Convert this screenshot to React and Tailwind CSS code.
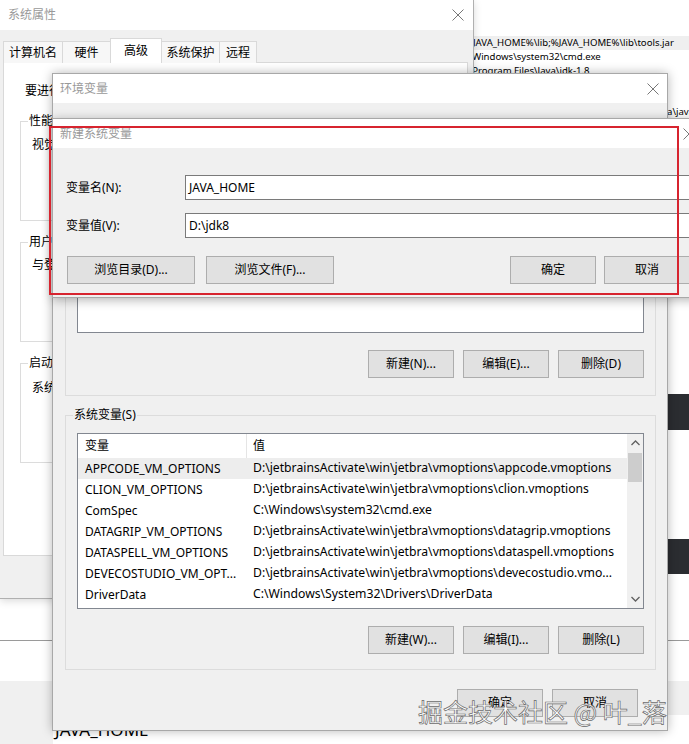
import React from 'react';

const font = "font-['Noto_Sans','Noto_Sans_CJK_SC',sans-serif]";

function CloseX({ className }) {
  return (
    <svg className={className} width="12" height="12" viewBox="0 0 12 12">
      <path d="M0.5 0.5 L11.5 11.5 M11.5 0.5 L0.5 11.5" stroke="#777" strokeWidth="1" fill="none" />
    </svg>
  );
}

function Btn({ children, className = '' }) {
  return (
    <div className={`h-[28px] flex items-center justify-center bg-[#e1e1e1] border border-[#adadad] text-[12px] text-black ${className}`}>
      {children}
    </div>
  );
}

function Group({ label, className = '', children }) {
  return (
    <div className={`relative border border-[#dcdcdc] ${className}`}>
      <span className="absolute left-[7px] top-[-10px] px-[1px] bg-inherit leading-[18px]">{label}</span>
      {children}
    </div>
  );
}

const userVars = [
  ['OneDrive', 'C:\\Users\\jason\\OneDrive'],
  ['Path', 'C:\\Users\\jason\\AppData\\Local\\Microsoft\\WindowsApps;'],
  ['TEMP', 'C:\\Users\\jason\\AppData\\Local\\Temp'],
  ['TMP', 'C:\\Users\\jason\\AppData\\Local\\Temp'],
];

const sysVars = [
  ['APPCODE_VM_OPTIONS', 'D:\\jetbrainsActivate\\win\\jetbra\\vmoptions\\appcode.vmoptions'],
  ['CLION_VM_OPTIONS', 'D:\\jetbrainsActivate\\win\\jetbra\\vmoptions\\clion.vmoptions'],
  ['ComSpec', 'C:\\Windows\\system32\\cmd.exe'],
  ['DATAGRIP_VM_OPTIONS', 'D:\\jetbrainsActivate\\win\\jetbra\\vmoptions\\datagrip.vmoptions'],
  ['DATASPELL_VM_OPTIONS', 'D:\\jetbrainsActivate\\win\\jetbra\\vmoptions\\dataspell.vmoptions'],
  ['DEVECOSTUDIO_VM_OPT...', 'D:\\jetbrainsActivate\\win\\jetbra\\vmoptions\\devecostudio.vmo...'],
  ['DriverData', 'C:\\Windows\\System32\\Drivers\\DriverData'],
];

function VarList({ rows, height, scroll }) {
  return (
    <div className="flex bg-white border border-[#828790]" style={{ height }}>
      <div className="flex-1 flex flex-col min-w-0">
        <div className="flex h-[24px] items-center">
          <div className="w-[169px] h-full flex items-center pl-[7px] border-r border-[#e5e5e5]">变量</div>
          <div className="flex-1 pl-[6px]">值</div>
        </div>
        {rows.map(([k, v], i) => (
          <div key={k} className={`flex h-[21px] items-center whitespace-nowrap overflow-hidden ${i === 0 ? 'bg-[#ededed]' : ''}`}>
            <div className="w-[169px] pl-[7px] shrink-0">{k}</div>
            <div className="pl-[6px] text-[12.2px]">{v}</div>
          </div>
        ))}
      </div>
      {scroll && (
        <div className="w-[16px] bg-[#f0f0f0] flex flex-col items-center">
          <svg className="mt-[6px]" width="9" height="6" viewBox="0 0 9 6">
            <path d="M0.5 5 L4.5 1 L8.5 5" stroke="#606060" strokeWidth="1.3" fill="none" />
          </svg>
          <div className="mt-[7px] w-[14px] h-[29px] bg-[#cdcdcd]" />
          <div className="flex-1" />
          <svg className="mb-[6px]" width="9" height="6" viewBox="0 0 9 6">
            <path d="M0.5 1 L4.5 5 L8.5 1" stroke="#606060" strokeWidth="1.3" fill="none" />
          </svg>
        </div>
      )}
    </div>
  );
}

export default function App() {
  return (
    <div className={`relative w-[689px] h-[744px] overflow-hidden bg-white text-[12px] text-black ${font}`}>
      {/* windows behind */}
      <div className="absolute left-[462px] top-[36px] w-[240px] flex flex-col text-[9.6px] leading-[14px] whitespace-nowrap">
        <div className="bg-[#efefef] pl-[3px]">%JAVA_HOME%\lib;%JAVA_HOME%\lib\tools.jar</div>
        <div className="pl-[-2px] ml-[-2px]">C:\Windows\system32\cmd.exe</div>
        <div className="ml-[-2px]">C:\Program Files\Java\jdk-1.8</div>
      </div>
      <div className="absolute left-[667px] top-[105px] text-[9.6px] leading-[14px] whitespace-nowrap">a\java</div>
      <div className="absolute left-[660px] top-[394px] w-[40px] h-[36px] bg-[#2b2d31]" />
      <div className="absolute left-[660px] top-[539px] w-[40px] h-[35px] bg-[#2b2d31]" />
      <div className="absolute left-0 top-[640px] w-full h-[1px] bg-[#9a9a9a]" />
      <div className="absolute left-0 top-[681px] w-full h-[34px] bg-[#f0f0f0]" />
      <div className="absolute left-0 top-[715px] w-[53px] h-[29px] bg-[#f0f0f0]" />
      <div className="absolute left-[55px] top-[720px] text-[17px] leading-[20px] whitespace-nowrap">JAVA_HOME</div>

      {/* 系统属性 */}
      <div className="absolute left-0 top-0 w-[474px] h-[599px] bg-[#f0f0f0] border-r border-b border-[#b0b0b0] shadow-[0_2px_8px_rgba(0,0,0,0.15)]">
        <div className="h-[30px] bg-white flex items-center justify-between pl-[8px] pr-[9px]">
          <span className="text-[#999]">系统属性</span>
          <CloseX />
        </div>
        <div className="pl-[3px] pr-[5px] pt-[8px]">
          <div className="flex items-end h-[25px] relative z-10">
            <div className="w-[60px] h-[22px] flex items-center justify-center border border-b-0 border-[#d9d9d9] bg-[#f7f7f7]">计算机名</div>
            <div className="w-[48px] h-[22px] flex items-center justify-center border border-b-0 border-l-0 border-[#d9d9d9] bg-[#f7f7f7]">硬件</div>
            <div className="w-[52px] h-[25px] flex items-start pt-[3px] justify-center border border-b-0 border-[#d9d9d9] bg-white -ml-[1px]">高级</div>
            <div className="w-[58px] h-[22px] flex items-center justify-center border border-b-0 border-l-0 border-[#d9d9d9] bg-[#f7f7f7]">系统保护</div>
            <div className="w-[37px] h-[22px] flex items-center justify-center border border-b-0 border-l-0 border-[#d9d9d9] bg-[#f7f7f7]">远程</div>
          </div>
          <div className="-mt-[1px] h-[494px] bg-white border border-[#d9d9d9] pl-[16px] pr-[12px] pt-[18px] flex flex-col">
            <div className="pl-[5px] whitespace-nowrap leading-[20px]">要进行大多数更改，你必须作为管理员登录。</div>
            <Group label="性能" className="mt-[20px] h-[100px] bg-white">
              <div className="pl-[11px] pt-[14px] whitespace-nowrap">视觉效果，处理器计划，内存使用，以及虚拟内存</div>
            </Group>
            <Group label="用户配置文件" className="mt-[21px] h-[100px] bg-white">
              <div className="pl-[11px] pt-[13px] whitespace-nowrap">与登录帐户相关的桌面设置</div>
            </Group>
            <Group label="启动和故障恢复" className="mt-[21px] h-[100px] bg-white">
              <div className="pl-[11px] pt-[15px] whitespace-nowrap">系统启动、系统故障和调试信息</div>
            </Group>
          </div>
        </div>
      </div>

      {/* 环境变量 */}
      <div className="absolute left-[52px] top-[73px] w-[616px] h-[658px] bg-[#f0f0f0] border border-[#a8a8a8] shadow-[0_0_10px_rgba(0,0,0,0.28)] flex flex-col">
        <div className="h-[29px] bg-white flex items-center justify-between pl-[7px] pr-[8px] shrink-0">
          <span className="text-[#999]">环境变量</span>
          <CloseX />
        </div>
        <div className="pl-[12px] pr-[11px] flex flex-col">
          <Group label="jason 的用户变量(U)" className="mt-[24px] bg-[#f0f0f0] px-[11px] pt-[18px] pb-[17px]">
            <VarList rows={userVars} height={187} />
            <div className="mt-[17px] flex justify-end gap-[9px]">
              <Btn className="w-[86px]">新建(N)...</Btn>
              <Btn className="w-[86px]">编辑(E)...</Btn>
              <Btn className="w-[86px]">删除(D)</Btn>
            </div>
          </Group>
          <Group label="系统变量(S)" className="mt-[19px] bg-[#f0f0f0] px-[11px] pt-[17px] pb-[15px]">
            <VarList rows={sysVars} height={176} scroll />
            <div className="mt-[17px] flex justify-end gap-[9px]">
              <Btn className="w-[86px]">新建(W)...</Btn>
              <Btn className="w-[86px]">编辑(I)...</Btn>
              <Btn className="w-[86px]">删除(L)</Btn>
            </div>
          </Group>
          <div className="mt-[19px] flex justify-end gap-[9px] pr-[18px]">
            <Btn className="w-[86px]">确定</Btn>
            <Btn className="w-[86px]">取消</Btn>
          </div>
        </div>
      </div>

      {/* 新建系统变量 */}
      <div className="absolute left-[52px] top-[118px] w-[650px] h-[180px] bg-[#f0f0f0] border border-[#a8a8a8] shadow-[0_2px_10px_rgba(0,0,0,0.3)] flex flex-col">
        <div className="h-[29px] bg-white flex items-center justify-between pl-[7px] pr-[6px] shrink-0">
          <span className="text-[#999]">新建系统变量</span>
          <CloseX />
        </div>
        <div className="pl-[13px] pr-[11px] pt-[27px] flex flex-col">
          <div className="flex items-center h-[25px]">
            <span className="w-[119px]">变量名(N):</span>
            <div className="flex-1 h-full bg-white border border-[#7a7a7a] flex items-center pl-[3px]">JAVA_HOME</div>
          </div>
          <div className="mt-[13px] flex items-center h-[25px]">
            <span className="w-[119px]">变量值(V):</span>
            <div className="flex-1 h-full bg-white border border-[#7a7a7a] flex items-center pl-[3px]">D:\jdk8</div>
          </div>
          <div className="mt-[18px] flex pl-[1px]">
            <Btn className="w-[128px]">浏览目录(D)...</Btn>
            <Btn className="w-[128px] ml-[11px]">浏览文件(F)...</Btn>
            <div className="flex-1" />
            <Btn className="w-[86px]">确定</Btn>
            <Btn className="w-[86px] ml-[8px]">取消</Btn>
          </div>
        </div>
      </div>

      {/* 红框 */}
      <div className="absolute left-[49px] top-[126px] w-[630px] h-[169px] border-2 border-[#d7242f]" />

      {/* 水印 */}
      <div className="absolute left-[418px] top-[694px] text-[25px] leading-[34px] whitespace-nowrap text-white font-['Noto_Sans_CJK_SC',sans-serif] [-webkit-text-stroke:0.7px_#6a6a6a]">
        掘金技术社区 @ 叶_落
      </div>
    </div>
  );
}
